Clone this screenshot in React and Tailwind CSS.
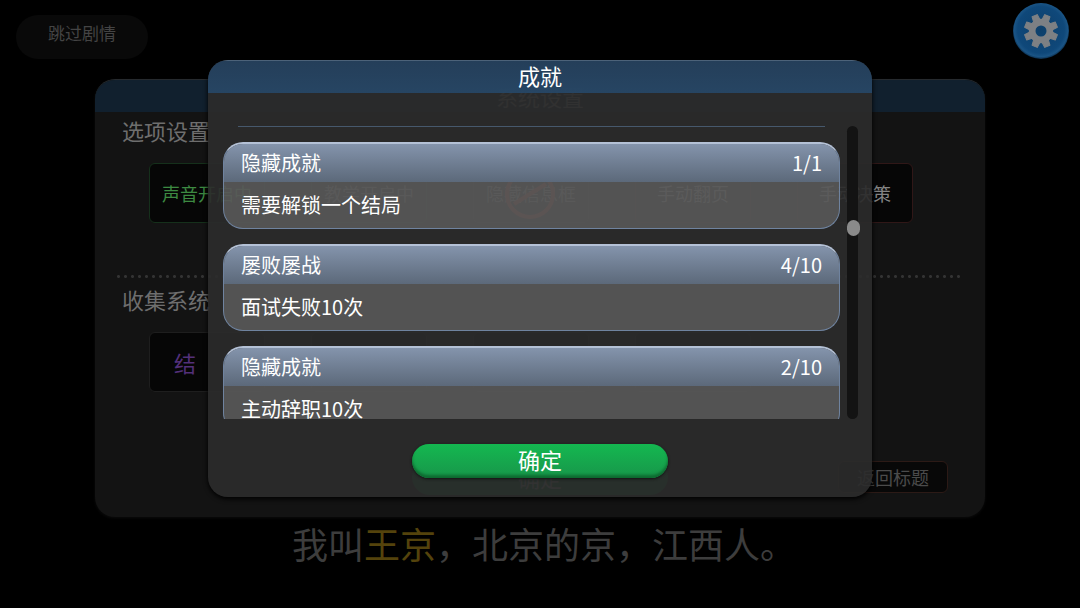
const options = [
  { label: "声音开启中", style: "border-[#15301b] text-[#3d8a42]" },
  { label: "教学开启中", style: "border-[#15301b] text-[#6b6b6b]" },
  { label: "隐藏信息框", style: "border-[#222] text-[#6b6b6b]", blocked: true },
  { label: "手动翻页", style: "border-[#301717] text-[#848484]" },
  { label: "手动决策", style: "border-[#301717] text-[#848484]" },
];

const collections = ["结", "", "", ""];

const achievements = [
  { title: "隐藏成就", progress: "1/1", detail: "需要解锁一个结局" },
  { title: "屡败屡战", progress: "4/10", detail: "面试失败10次" },
  { title: "隐藏成就", progress: "2/10", detail: "主动辞职10次" },
];

function GearIcon() {
  const teeth = [22.5, 67.5, 112.5, 157.5, 202.5, 247.5, 292.5, 337.5];
  return (
    <svg viewBox="0 0 56 56" className="size-14">
      <defs>
        <radialGradient id="gearBg" cx="50%" cy="48%" r="52%">
          <stop offset="0" stopColor="#0d3f6a" />
          <stop offset="0.8" stopColor="#0f487a" />
          <stop offset="0.92" stopColor="#1a5485" />
          <stop offset="1" stopColor="#0b2c49" />
        </radialGradient>
      </defs>
      <circle cx="28" cy="28" r="28" fill="url(#gearBg)" />
      <g fill="#7d8084">
        {teeth.map((a) => (
          <path
            key={a}
            d="M24.6 17 L25.2 11.4 H30.8 L31.4 17 Z"
            stroke="#7d8084"
            strokeLinejoin="round"
            transform={`rotate(${a} 28 28)`}
          />
        ))}
        <path
          fillRule="evenodd"
          d="M28 15.8a12.2 12.2 0 1 0 0 24.4a12.2 12.2 0 1 0 0-24.4zM28 22.5a5.5 5.5 0 1 1 0 11a5.5 5.5 0 1 1 0-11z"
        />
      </g>
    </svg>
  );
}

function OptionButton({ label, style, blocked }) {
  return (
    <button
      className={`relative h-15 w-[116px] shrink-0 rounded-md border bg-[#060606] text-lg ${style}`}
    >
      {label}
      {blocked && (
        <svg
          viewBox="0 0 52 52"
          className="absolute top-1 left-[30px] size-[52px]"
          fill="none"
          stroke="#8a2018"
          strokeWidth="4"
        >
          <circle cx="26" cy="26" r="23" />
          <path d="M10 36L42 16" />
        </svg>
      )}
    </button>
  );
}

function SettingsPanel() {
  return (
    <section className="mx-auto mt-5 w-full max-w-[890px] overflow-hidden rounded-[20px] border-t border-[#262a2e] bg-[#131313] pb-[22px] shadow-[0_1px_3px_#0c0c0c]">
      <h2 className="h-8 bg-[#11202e] text-center text-[22px] leading-8 text-[#707070]">
        系统设置
      </h2>
      <div className="px-5">
        <h3 className="mt-[2px] pl-[7px] text-[22px] leading-8 text-[#6e6e6e]">
          选项设置
        </h3>
        <div className="mt-[17px] flex gap-[46px] pl-[34px]">
          {options.map((o) => (
            <OptionButton key={o.label} {...o} />
          ))}
        </div>
        <div className="mr-[5px] mt-[52px] h-[3px] bg-[radial-gradient(circle,#333_1px,transparent_2px)] bg-[length:7px_3px]" />
        <h3 className="mt-[5px] pl-[7px] text-[22px] leading-8 text-[#6e6e6e]">
          收集系统
        </h3>
        <div className="mt-[17px] flex gap-[46px] pl-[34px]">
          {collections.map((c, i) => (
            <button
              key={i}
              aria-label={c ? undefined : `收集 ${i + 1}`}
              className="h-15 w-[116px] shrink-0 rounded-md border border-[#1e1e1e] bg-[#060606] pl-6 text-left text-[22px] leading-8 text-[#53307a]"
            >
              {c}
            </button>
          ))}
        </div>
        <div className="mt-[67px] grid grid-cols-[1fr_256px_1fr] items-center">
          <button className="col-start-2 h-[36px] rounded-full bg-[#0b5c2a] text-[22px] text-[#7d7d7d]">
            确定
          </button>
          <button className="mr-[17px] h-8 w-[110px] justify-self-end rounded-md border border-[#2c1a16] bg-[#080808] text-lg leading-none text-[#4b4b4b]">
            返回标题
          </button>
        </div>
      </div>
    </section>
  );
}

function Achievement({ title, progress, detail }) {
  return (
    <li className="h-[87px] shrink-0 overflow-hidden rounded-[20px] border border-t-2 border-[#6f839f] border-t-[#b4c1d6] bg-white/20 text-xl text-white">
      <div className="flex h-[38px] items-center justify-between bg-linear-to-b from-[#8494ac] to-[#5c697a] px-[17px]">
        <span>{title}</span>
        <span>{progress}</span>
      </div>
      <p className="px-[17px] leading-[46px]">{detail}</p>
    </li>
  );
}

function AchievementDialog() {
  return (
    <div className="absolute inset-0 flex items-start justify-center pt-[60px]">
      <div
        role="dialog"
        aria-labelledby="dialog-title"
        className="w-full max-w-[664px] overflow-hidden rounded-[20px] bg-[#2b2b2b]/92 pb-[19px] shadow-[0_2px_5px_#000]"
      >
        <h2
          id="dialog-title"
          className="h-[33px] border-t border-[#4c6279] bg-linear-to-b from-[#24415f]/90 to-[#264869]/90 text-center text-[22px] leading-7 text-white"
        >
          成就
        </h2>
        <div className="mt-[33px] flex h-[293px] gap-[7px] pr-[14px] pl-[15px]">
          <ul className="flex flex-1 flex-col gap-[15px] overflow-hidden">
            <li className="mx-[15px] h-px shrink-0 bg-[#46586c]" />
            {achievements.map((a, i) => (
              <Achievement key={i} {...a} />
            ))}
          </ul>
          <div className="relative w-[11px] rounded-full bg-[#131313]">
            <div className="absolute top-[94px] h-4 w-[13px] rounded-full bg-[#8a8a8a]" />
          </div>
        </div>
        <button className="mx-auto mt-[25px] block h-[34px] w-64 rounded-full bg-linear-to-b from-[#14b850] to-[#17964a] pb-1 text-[22px] leading-7 text-white shadow-[inset_0_-3px_3px_#0d6a30,0_1px_3px_#111]">
          确定
        </button>
      </div>
    </div>
  );
}

function App() {
  return (
    <main className="relative min-h-screen overflow-hidden bg-black font-['Noto_Sans_CJK_SC',sans-serif]">
      <header className="flex items-end justify-between pt-[3px] pr-[11px] pl-4">
        <button className="h-11 rounded-full bg-[#090909] px-8 pb-2 text-[17px] text-[#444]">
          跳过剧情
        </button>
        <button aria-label="设置" className="rounded-full">
          <GearIcon />
        </button>
      </header>
      <SettingsPanel />
      <p className="mt-[2px] pl-2 text-center text-4xl leading-12 text-[#3d3d3d]">
        我叫<span className="text-[#54430c]">王京</span>，北京的京，江西人。
      </p>
      <AchievementDialog />
    </main>
  );
}

export default App;
